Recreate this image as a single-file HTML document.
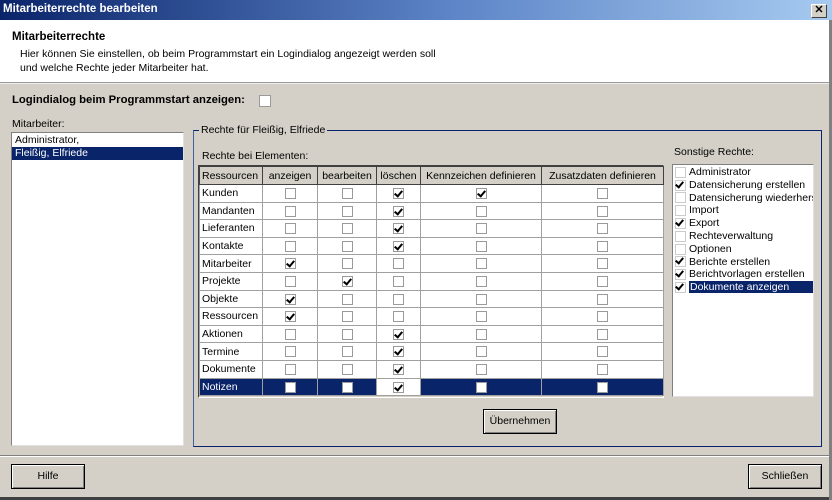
<!DOCTYPE html>
<html><head><meta charset="utf-8"><style>
*{box-sizing:border-box;margin:0;padding:0}
body{width:832px;height:500px;overflow:hidden;background:#d4d0c8;font-family:"Liberation Sans",sans-serif;font-size:10.5px;color:#000;position:relative}
.a{position:absolute}
.title{left:0;top:0;width:832px;height:20px;background:linear-gradient(90deg,#0a246a,#5e86c8 55%,#a6caf0);color:#fff;font-weight:bold;font-size:11.5px;padding:3px 3px}
.close{left:811px;top:4px;width:16px;height:14px;background:#d4d0c8;border:1px solid;border-color:#fff #404040 #404040 #fff;font-size:11px;font-weight:bold;text-align:center;line-height:11px}
.hdr{left:0;top:20px;width:832px;height:64px;background:#fff;border-bottom:2px groove #eee}
.btn{border:1px solid #000;box-shadow:inset 1px 1px #fff,inset -1px -1px #808080;text-align:center;line-height:23px;background:#d4d0c8}
.cb{display:inline-block;width:11px;height:11px;background:#fff;border:1px solid #9a9a9a;vertical-align:middle;position:relative}
.cb.c::after{content:"";position:absolute;left:2px;top:0px;width:3px;height:6px;border:solid #000;border-width:0 2px 2px 0;transform:rotate(40deg)}
table{border-collapse:collapse;table-layout:fixed}
td{border:1px solid #a0a0a0;height:17.6px;line-height:14px;padding:0 0 0 2px;background:#fff;white-space:nowrap;overflow:hidden;vertical-align:middle}
td.m{text-align:center;padding:0}
tr.h td{background:#d4d0c8;border-color:#404040;height:18px;text-align:center;padding:0}
tr.h td:first-child{text-align:left;padding-left:2px}
tr.s td{background:#0a246a;color:#fff}
tr.s td.w{background:#fff}
.li{height:12.8px;line-height:12.8px;white-space:nowrap;padding-left:2px}
.li .cb{border:none;width:11px;height:11px;margin-right:3px;background:#fff;outline:1px solid #ccc;outline-offset:-1px}
</style></head><body>
<div class="a title">Mitarbeiterrechte bearbeiten</div>
<div class="a close">✕</div>
<div class="a hdr">
 <div class="a" style="left:12px;top:11px;font-weight:bold;font-size:11.5px">Mitarbeiterrechte</div>
 <div class="a" style="left:20px;top:27px;line-height:14px">Hier können Sie einstellen, ob beim Programmstart ein Logindialog angezeigt werden soll<br>und welche Rechte jeder Mitarbeiter hat.</div>
</div>
<div class="a" style="left:12px;top:94px;font-weight:bold;font-size:11.3px;white-space:nowrap">Logindialog beim Programmstart anzeigen:</div>
<div class="a cb" style="left:259px;top:95px;width:12px;height:12px"></div>
<div class="a" style="left:12px;top:118px">Mitarbeiter:</div>
<div class="a" style="left:11px;top:132px;width:173px;height:314px;background:#fff;border:1px solid #808080;border-right-color:#e0e0e0;border-bottom-color:#e0e0e0">
 <div style="padding-left:3px;height:13px;line-height:13px;margin-top:1px">Administrator,</div>
 <div style="padding-left:3px;height:13px;line-height:13px;background:#0a246a;color:#fff">Fleißig, Elfriede</div>
</div>
<div class="a" style="left:193px;top:130px;width:629px;height:317px;border:1px solid #0a246a;border-left-color:#4060a0"></div>
<div class="a" style="left:199px;top:124px;background:#d4d0c8;padding:0 2px">Rechte für Fleißig, Elfriede</div>
<div class="a" style="left:202px;top:150px">Rechte bei Elementen:</div>
<div class="a" style="left:198px;top:165px;width:466px;height:233px;border:1px solid;border-color:#404040 #fff #fff #404040">
<table style="width:464px">
<col style="width:63px"><col style="width:55px"><col style="width:59px"><col style="width:44px"><col style="width:121px"><col style="width:122px">
<tr class="h"><td>Ressourcen</td><td>anzeigen</td><td>bearbeiten</td><td>löschen</td><td>Kennzeichen definieren</td><td>Zusatzdaten definieren</td></tr>
<tr><td>Kunden</td><td class="m"><i class="cb"></i></td><td class="m"><i class="cb"></i></td><td class="m"><i class="cb c"></i></td><td class="m"><i class="cb c"></i></td><td class="m"><i class="cb"></i></td></tr>
<tr><td>Mandanten</td><td class="m"><i class="cb"></i></td><td class="m"><i class="cb"></i></td><td class="m"><i class="cb c"></i></td><td class="m"><i class="cb"></i></td><td class="m"><i class="cb"></i></td></tr>
<tr><td>Lieferanten</td><td class="m"><i class="cb"></i></td><td class="m"><i class="cb"></i></td><td class="m"><i class="cb c"></i></td><td class="m"><i class="cb"></i></td><td class="m"><i class="cb"></i></td></tr>
<tr><td>Kontakte</td><td class="m"><i class="cb"></i></td><td class="m"><i class="cb"></i></td><td class="m"><i class="cb c"></i></td><td class="m"><i class="cb"></i></td><td class="m"><i class="cb"></i></td></tr>
<tr><td>Mitarbeiter</td><td class="m"><i class="cb c"></i></td><td class="m"><i class="cb"></i></td><td class="m"><i class="cb"></i></td><td class="m"><i class="cb"></i></td><td class="m"><i class="cb"></i></td></tr>
<tr><td>Projekte</td><td class="m"><i class="cb"></i></td><td class="m"><i class="cb c"></i></td><td class="m"><i class="cb"></i></td><td class="m"><i class="cb"></i></td><td class="m"><i class="cb"></i></td></tr>
<tr><td>Objekte</td><td class="m"><i class="cb c"></i></td><td class="m"><i class="cb"></i></td><td class="m"><i class="cb"></i></td><td class="m"><i class="cb"></i></td><td class="m"><i class="cb"></i></td></tr>
<tr><td>Ressourcen</td><td class="m"><i class="cb c"></i></td><td class="m"><i class="cb"></i></td><td class="m"><i class="cb"></i></td><td class="m"><i class="cb"></i></td><td class="m"><i class="cb"></i></td></tr>
<tr><td>Aktionen</td><td class="m"><i class="cb"></i></td><td class="m"><i class="cb"></i></td><td class="m"><i class="cb c"></i></td><td class="m"><i class="cb"></i></td><td class="m"><i class="cb"></i></td></tr>
<tr><td>Termine</td><td class="m"><i class="cb"></i></td><td class="m"><i class="cb"></i></td><td class="m"><i class="cb c"></i></td><td class="m"><i class="cb"></i></td><td class="m"><i class="cb"></i></td></tr>
<tr><td>Dokumente</td><td class="m"><i class="cb"></i></td><td class="m"><i class="cb"></i></td><td class="m"><i class="cb c"></i></td><td class="m"><i class="cb"></i></td><td class="m"><i class="cb"></i></td></tr>
<tr class="s"><td>Notizen</td><td class="m"><i class="cb"></i></td><td class="m"><i class="cb"></i></td><td class="m w"><i class="cb c"></i></td><td class="m"><i class="cb"></i></td><td class="m"><i class="cb"></i></td></tr>
</table></div>
<div class="a" style="left:674px;top:146px">Sonstige Rechte:</div>
<div class="a" style="left:672px;top:164px;width:142px;height:233px;background:#fff;border:1px solid #808080;border-right-color:#e0e0e0;border-bottom-color:#e0e0e0;padding-top:1px;overflow:hidden">
<div class="li"><i class="cb"></i>Administrator</div>
<div class="li"><i class="cb c"></i>Datensicherung erstellen</div>
<div class="li"><i class="cb"></i>Datensicherung wiederherstellen</div>
<div class="li"><i class="cb"></i>Import</div>
<div class="li"><i class="cb c"></i>Export</div>
<div class="li"><i class="cb"></i>Rechteverwaltung</div>
<div class="li"><i class="cb"></i>Optionen</div>
<div class="li"><i class="cb c"></i>Berichte erstellen</div>
<div class="li"><i class="cb c"></i>Berichtvorlagen erstellen</div>
<div class="li"><i class="cb c"></i><span style="background:#0a246a;color:#fff;padding:0 28px 0 1px">Dokumente anzeigen</span></div>
</div>
<div class="a btn" style="left:483px;top:409px;width:74px;height:25px">Übernehmen</div>
<div class="a" style="left:0;top:455px;width:832px;height:2px;border-top:1px solid #808080;border-bottom:1px solid #fff"></div>
<div class="a btn" style="left:11px;top:464px;width:74px;height:25px">Hilfe</div>
<div class="a btn" style="left:748px;top:464px;width:74px;height:25px">Schließen</div>
<div class="a" style="left:0;top:497px;width:832px;height:3px;background:#404040"></div>
<div class="a" style="left:829px;top:20px;width:3px;height:480px;background:#808080"></div>
</body></html>
